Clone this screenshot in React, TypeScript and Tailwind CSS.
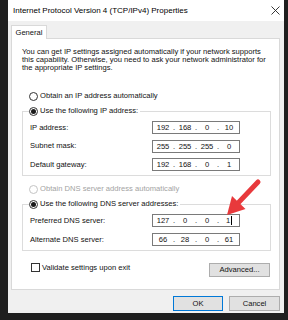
import React from 'react';

const font = { fontFamily: '"Liberation Sans", Arial, sans-serif' };

function Radio({ checked, disabled }: { checked?: boolean; disabled?: boolean }) {
  return (
    <span
      className={
        disabled
          ? 'w-[9px] h-[9px] rounded-full border border-[#c4c4c4] bg-white flex items-center justify-center shrink-0'
          : 'w-[9px] h-[9px] rounded-full border border-[#333333] bg-white flex items-center justify-center shrink-0'
      }
    >
      {checked && <span className="w-[5px] h-[5px] rounded-full bg-[#1a1a1a]" />}
    </span>
  );
}

function IpBox({ parts, cursor }: { parts: string[]; cursor?: boolean }) {
  return (
    <div className="w-[88px] h-[13px] border border-[#7a7a7a] bg-white flex items-center pl-[1px] leading-[11px] text-[#111]">
      {parts.map((p, i) => (
        <React.Fragment key={i}>
          <span className="w-[18px] text-center flex justify-center items-center">
            {p}
            {cursor && i === 3 && <span className="inline-block w-px h-[9px] bg-black ml-px" />}
          </span>
          {i < 3 && <span className="w-[4px] text-center">.</span>}
        </React.Fragment>
      ))}
    </div>
  );
}

function Row({ label, parts, cursor }: { label: string; parts: string[]; cursor?: boolean }) {
  return (
    <div className="flex items-center h-[13px]">
      <span className="w-[122px]">{label}</span>
      <IpBox parts={parts} cursor={cursor} />
    </div>
  );
}

export default function App() {
  return (
    <div className="relative w-[288px] h-[320px] bg-[#1f1f1f] pl-[8px] overflow-hidden" style={font}>
      <div className="w-[276px] h-[313px] flex flex-col text-[7.6px] text-[#111]">
        {/* title bar */}
        <div className="h-[21px] bg-white flex items-center justify-between pl-[5px] pr-[4px] shrink-0">
          <span className="text-[8px] text-black">Internet Protocol Version 4 (TCP/IPv4) Properties</span>
          <svg width="9" height="9" viewBox="0 0 9 9">
            <path d="M0.5 0.5 L8.5 8.5 M8.5 0.5 L0.5 8.5" stroke="#222" strokeWidth="0.9" />
          </svg>
        </div>

        <div className="flex-1 bg-[#f0f0f0] flex flex-col pl-[3px] pr-[4px] pb-[2px]">
          <div className="mt-[4px] w-[36px] h-[14px] bg-white border border-b-0 border-[#d9d9d9] flex items-center justify-center -mb-px relative z-10">
            General
          </div>
          <div className="h-[252px] bg-white border border-[#d9d9d9] flex flex-col">
            <p className="mt-[9px] ml-[10px] leading-[8px] w-[252px]">
              You can get IP settings assigned automatically if your network supports this capability. Otherwise, you need to ask your network administrator for the appropriate IP settings.
            </p>

            <div className="mt-[19px] ml-[17px] h-[10px] flex items-center gap-[2px]">
              <Radio />
              <span>Obtain an IP address automatically</span>
            </div>

            <fieldset className="mt-[5px] ml-[10px] mr-[8px] border border-[#dcdcdc] pl-[7px] pt-[5px] pb-[4px] flex flex-col gap-[5.5px]">
              <legend className="-ml-[1px] pr-[2px] h-[10px] flex items-center gap-[2px]">
                <Radio checked />
                <span>Use the following IP address:</span>
              </legend>
              <Row label="IP address:" parts={['192', '168', '0', '10']} />
              <Row label="Subnet mask:" parts={['255', '255', '255', '0']} />
              <Row label="Default gateway:" parts={['192', '168', '0', '1']} />
            </fieldset>

            <div className="mt-[8px] ml-[17px] h-[10px] flex items-center gap-[2px] text-[#a3a3a3]">
              <Radio disabled />
              <span>Obtain DNS server address automatically</span>
            </div>

            <fieldset className="mt-[5px] ml-[10px] mr-[8px] border border-[#dcdcdc] pl-[7px] pt-[5px] pb-[4px] flex flex-col gap-[6px]">
              <legend className="-ml-[1px] pr-[2px] h-[10px] flex items-center gap-[2px]">
                <Radio checked />
                <span>Use the following DNS server addresses:</span>
              </legend>
              <Row label="Preferred DNS server:" parts={['127', '0', '0', '1']} cursor />
              <Row label="Alternate DNS server:" parts={['66', '28', '0', '61']} />
            </fieldset>

            <div className="mt-[12px] ml-[19px] mr-[9px] flex items-start justify-between">
              <div className="flex items-center gap-[2px] h-[9px]">
                <span className="w-[9px] h-[9px] border border-[#333333] bg-white" />
                <span>Validate settings upon exit</span>
              </div>
              <button className="w-[61px] h-[14px] bg-[#e1e1e1] border border-[#adadad] flex items-center justify-center">
                Advanced...
              </button>
            </div>
          </div>

          <div className="mt-[6px] flex justify-end gap-[6px]">
            <button className="w-[50px] h-[15px] bg-[#e1e1e1] border border-[#0078d7] flex items-center justify-center">
              OK
            </button>
            <button className="w-[51px] h-[15px] bg-[#e1e1e1] border border-[#adadad] flex items-center justify-center">
              Cancel
            </button>
          </div>
        </div>
      </div>

      <svg className="absolute left-0 top-0 pointer-events-none" width="288" height="320" viewBox="0 0 288 320">
        <line x1="258" y1="182" x2="239" y2="202" stroke="#e8393c" strokeWidth="5" strokeLinecap="round" />
        <polygon points="227,215 232,196 245.5,209" fill="#e8393c" />
      </svg>
    </div>
  );
}
